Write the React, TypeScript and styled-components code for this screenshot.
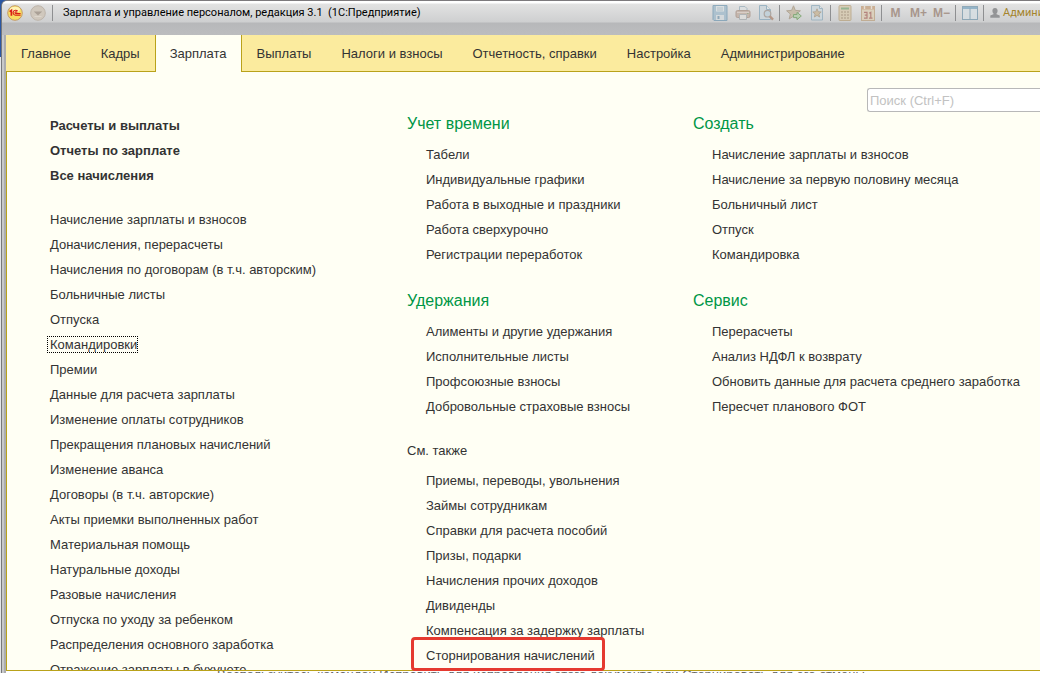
import React from "react";
import styled, { createGlobalStyle, css } from "styled-components";

const Global = createGlobalStyle`
  * { box-sizing: border-box; }
  body { margin: 0; font-family: "Liberation Sans", Arial, sans-serif; font-size: 13px; color: #333; }
`;

const Backdrop = styled.div`
  height: 100vh;
  padding-left: 1px;
  overflow: hidden;
  background: linear-gradient(#2b57a3 0 57px, #e4e6e9 57px);
`;
const Frame = styled.div`
  height: 100%;
  display: flex;
  flex-direction: column;
  border-top: 1px solid #7d7a7d;
  border-left: 1px solid #77787a;
  border-top-left-radius: 6px;
  background: linear-gradient(90deg, #c8c9ca 0 2px, #acadaf 2px 4px, #b9babc 4px);
  overflow: hidden;
`;
const TitleBar = styled.header`
  flex: none;
  height: 34px;
  padding: 0 0 10px 5px;
  display: flex;
  align-items: center;
  overflow: hidden;
  background: linear-gradient(#fff 0 2px, #e2e2e2 3px, #cecfd0 21px, #b7b8ba 22px, #bcbdbf 34px);
`;
const WindowButtons = styled.div`
  flex: none;
  display: flex;
  gap: 7px;
  margin-right: 4px;
`;
const RoundButton = styled.button`
  width: 16px;
  height: 16px;
  padding: 0;
  border: 0;
  background: none;
  svg { display: block; }
`;
const Divider = styled.span`
  flex: none;
  width: 1px;
  height: 16px;
  margin: 0 2px;
  background: #8e8f91;
`;
const Title = styled.h1`
  flex: 1;
  min-width: 0;
  overflow: hidden;
  margin: 0 0 0 8px;
  font-family: Roboto, "Liberation Sans", sans-serif;
  font-size: 11px;
  line-height: 16px;
  font-weight: 400;
  white-space: pre;
  color: #000;
`;
const Tools = styled.div`
  flex: none;
  display: flex;
  align-items: center;
`;
const Tool = styled.button`
  width: 23px;
  height: 16px;
  padding: 0;
  border: 0;
  display: flex;
  align-items: center;
  justify-content: center;
  background: none;
  color: #a8968c;
  font: bold 12px "Liberation Sans", sans-serif;
  svg { display: block; opacity: 0.8; }
`;
const User = styled.a`
  display: flex;
  align-items: center;
  gap: 3px;
  width: 54px;
  padding-left: 4px;
  overflow: hidden;
  white-space: nowrap;
  font-family: Roboto, sans-serif;
  font-size: 11px;
  line-height: 16px;
  color: #a5842c;
  text-decoration: none;
  svg { flex: none; }
`;

const Body = styled.div`
  flex: 1;
  min-height: 0;
  margin-left: 4px;
  display: flex;
  flex-direction: column;
  background: #fff;
`;
const Tabs = styled.nav`
  flex: none;
  height: 37px;
  display: flex;
  background: #fbeb9e;
  border-bottom: 1px solid #b9a21a;
`;
const Tab = styled.a<{ $active?: boolean }>`
  height: 37px;
  padding: 0 15px;
  line-height: 37px;
  color: #333;
  text-decoration: none;
  white-space: nowrap;
  ${(p) => p.$active && css`
    padding: 0 14px;
    background: #fffff4;
    border: solid #b9a21a;
    border-width: 0 1px;
  `}
`;
const Panel = styled.main`
  flex: 1;
  min-height: 0;
  display: flex;
  flex-direction: column;
  padding: 16px 0 0 40px;
  background: #fffff4;
  border-left: 1px solid #b9a21a;
  border-bottom: 1px solid #b9a21a;
`;
const Search = styled.input`
  flex: none;
  align-self: flex-end;
  width: 173px;
  height: 24px;
  padding: 0 2px;
  border: 1px solid #b8b8b8;
  border-right: 0;
  border-radius: 3px 0 0 3px;
  background: #fff;
  font: 13px "Liberation Sans", Arial, sans-serif;
  &::placeholder { color: #c2c2c2; }
`;
const Columns = styled.div`
  flex: 1;
  min-height: 0;
  padding-top: 1px;
  display: grid;
  grid-template-columns: 360fr 286fr 347fr;
  grid-template-rows: minmax(0, 1fr);
`;
const Journal = styled.section`
  min-width: 0;
  padding-left: 3px;
  overflow: hidden;
`;
const Column = styled.div`
  min-width: 0;
`;
const List = styled.ul<{ $indent?: boolean; $strong?: boolean }>`
  list-style: none;
  margin: 0 0 ${(p) => (p.$strong ? 19 : 23)}px;
  padding: 0 0 0 ${(p) => (p.$indent ? 19 : 0)}px;
  font-weight: ${(p) => (p.$strong ? 700 : 400)};
`;
const Item = styled.li<{ $marked?: boolean }>`
  position: relative;
  width: fit-content;
  height: 25px;
  line-height: 25px;
  white-space: nowrap;
  ${(p) => p.$marked && css`
    &::after {
      content: "";
      position: absolute;
      inset: -6px -10px -3px -15px;
      border: 3px solid #e53a30;
      border-radius: 4px;
      pointer-events: none;
    }
  `}
`;
const Link = styled.a<{ $focused?: boolean }>`
  color: inherit;
  text-decoration: none;
  ${(p) => p.$focused && css`
    margin-left: -2px;
    padding-left: 2px;
    outline: 1px dotted #000;
  `}
`;
const Heading = styled.h2<{ $plain?: boolean }>`
  margin: 0 0 ${(p) => (p.$plain ? 8 : 7)}px;
  font-size: ${(p) => (p.$plain ? 13 : 16)}px;
  line-height: ${(p) => (p.$plain ? 18 : 22)}px;
  font-weight: 400;
  color: ${(p) => (p.$plain ? "#333" : "#009646")};
`;
const Hint = styled.footer`
  flex: none;
  height: 2px;
  padding-left: 211px;
  overflow: hidden;
  line-height: 8px;
  white-space: nowrap;
  color: #666;
`;

const LogoIcon = () => (
  <svg width="16" height="16" viewBox="0 0 16 16" aria-hidden="true">
    <circle cx="8" cy="8" r="7.3" fill="#f8dd62" stroke="#c39a67" />
    <ellipse cx="8" cy="4.6" rx="5" ry="2.8" fill="#fff3b4" />
    <path d="M2.6 6.6L4.4 5.4V10.8" fill="none" stroke="#d91e18" strokeWidth="1.7" />
    <path d="M10.6 6.2A2.5 2.5 0 1 0 8.6 10.2H13.6M10 7.6A1 1 0 1 0 8.6 8.6H13.6" fill="none" stroke="#d91e18" strokeWidth="1.1" />
  </svg>
);
const MenuIcon = () => (
  <svg width="16" height="16" viewBox="0 0 16 16" aria-hidden="true">
    <circle cx="8" cy="8" r="7.3" fill="#d0c8bd" stroke="#bdb4aa" />
    <path d="M3.8 6.4H12.2L8 10.6Z" fill="#aaa096" />
    <path d="M4.5 11.5H11.5" stroke="#ddd6cc" />
  </svg>
);
const SaveIcon = () => (
  <svg width="16" height="16" viewBox="0 0 16 16" aria-hidden="true">
    <path d="M1 .5H15V15.5H2L1 14.5Z" fill="#a3bccc" stroke="#7b9eb5" />
    <path d="M4 1H12V6.5H4Z" fill="#d9e0e3" />
    <path d="M5 3H11M5 5H11" stroke="#a8bbc6" />
    <path d="M4 10H12V15H4Z" fill="#d5dbde" />
    <path d="M5.5 11H7.5V14H5.5Z" fill="#7f9db1" />
  </svg>
);
const PrintIcon = () => (
  <svg width="16" height="16" viewBox="0 0 16 16" aria-hidden="true">
    <path d="M4.5 6V1.5H10L12 3.5V6" fill="#dce0e2" stroke="#9db0bc" />
    <rect x="1" y="5.5" width="14" height="7" rx="1.5" fill="#c1aea2" stroke="#a99488" />
    <path d="M2 7.5H14" stroke="#d9ccc3" />
    <path d="M4.5 9.5H11.5V14.5H4.5Z" fill="#dfdedc" stroke="#a7acae" />
    <path d="M12 8.5H13.5" stroke="#8fa57f" />
  </svg>
);
const PreviewIcon = () => (
  <svg width="16" height="16" viewBox="0 0 16 16" aria-hidden="true">
    <path d="M1.5 .5H8.5L12.5 4.5V14.5H1.5Z" fill="#ccd6dc" stroke="#8baabd" />
    <path d="M8.5 .5V4.5H12.5" fill="#e1e6e8" stroke="#8baabd" />
    <circle cx="9.5" cy="8.7" r="3.3" fill="#bfd0da" stroke="#a39a94" strokeWidth="1.2" />
    <path d="M11.8 11.2L15 14.6" stroke="#ad8975" strokeWidth="2.4" />
  </svg>
);
const StarArrowIcon = () => (
  <svg width="16" height="16" viewBox="0 0 16 16" aria-hidden="true">
    <path d="M7.5 .8L9.3 5.4L14.4 5.8L10.5 8.9L11.7 13.7L7.5 11.2L3.2 13.9L4.4 9L.6 5.8L5.6 5.4Z" fill="#c4b79f" stroke="#a89a86" />
    <path d="M7.5 9.5H11V7.3L15.3 11L11 14.7V12.6H7.5Z" fill="#b3cda7" stroke="#74a066" />
  </svg>
);
const PageStarIcon = () => (
  <svg width="16" height="16" viewBox="0 0 16 16" aria-hidden="true">
    <path d="M2.5 .5H10.5L13.5 3.5V15H2.5Z" fill="#cbd6dc" stroke="#93adbd" />
    <path d="M10.5 .5V3.5H13.5" fill="#e1e6e8" stroke="#93adbd" />
    <path d="M8 3.8L9.2 6.7L12.2 7L9.9 9L10.6 12L8 10.4L5.4 12L6.1 9L3.8 7L6.8 6.7Z" fill="#c8b697" stroke="#a4937c" strokeWidth=".8" />
  </svg>
);
const CalculatorIcon = () => (
  <svg width="16" height="16" viewBox="0 0 16 16" aria-hidden="true">
    <rect x="2" y=".5" width="12" height="15" rx="1" fill="#d6c8ad" stroke="#b9a583" />
    <path d="M4 3.5H12" stroke="#84ab80" strokeWidth="2" />
    <path d="M4 7H12M4 10H12M4 13H12" stroke="#a08c74" strokeWidth="1.2" strokeDasharray="2 1" />
  </svg>
);
const CalendarIcon = () => (
  <svg width="16" height="16" viewBox="0 0 16 16" aria-hidden="true">
    <rect x="1.5" y="1.5" width="13" height="14" fill="#dccfb6" stroke="#bda585" />
    <path d="M1 3H15" stroke="#c9a482" strokeWidth="3" />
    <path d="M4.5 0V4M11.5 0V4" stroke="#e8e0d6" strokeWidth="1.4" />
    <path d="M4 7.3H7V13.2H4M4.8 10.2H7M9.2 8.3L10.8 7.3V13.4M9 13.2H12.5" fill="none" stroke="#ac7068" strokeWidth="1.2" />
  </svg>
);
const PanelsIcon = () => (
  <svg width="16" height="16" viewBox="0 0 16 16" aria-hidden="true">
    <rect x=".5" y="1.5" width="15" height="13" fill="#d7dfe3" stroke="#7d9db0" />
    <path d="M1 3H15" stroke="#84acc5" strokeWidth="2" />
    <path d="M8 3V14" stroke="#7d9db0" />
  </svg>
);
const UserIcon = () => (
  <svg width="10" height="12" viewBox="0 0 10 12" aria-hidden="true">
    <path d="M5 1C6.8 1 7.6 2.1 7.6 3.8C7.6 5 7.1 6 6.5 6.6V7.3L9.7 8.4V10.8H.3V8.4L3.5 7.3V6.6C2.9 6 2.4 5 2.4 3.8C2.4 2.1 3.2 1 5 1Z" fill="#939496" />
  </svg>
);

const tabs = ["Главное", "Кадры", "Зарплата", "Выплаты", "Налоги и взносы", "Отчетность, справки", "Настройка", "Администрирование"];
const main = ["Расчеты и выплаты", "Отчеты по зарплате", "Все начисления"];
const journals = [
  "Начисление зарплаты и взносов", "Доначисления, перерасчеты", "Начисления по договорам (в т.ч. авторским)",
  "Больничные листы", "Отпуска", "Командировки", "Премии", "Данные для расчета зарплаты",
  "Изменение оплаты сотрудников", "Прекращения плановых начислений", "Изменение аванса",
  "Договоры (в т.ч. авторские)", "Акты приемки выполненных работ", "Материальная помощь",
  "Натуральные доходы", "Разовые начисления", "Отпуска по уходу за ребенком",
  "Распределения основного заработка", "Отражение зарплаты в бухучете",
];

type GroupProps = { title: string; items: string[]; plain?: boolean };
const middle: GroupProps[] = [
  { title: "Учет времени", items: ["Табели", "Индивидуальные графики", "Работа в выходные и праздники", "Работа сверхурочно", "Регистрации переработок"] },
  { title: "Удержания", items: ["Алименты и другие удержания", "Исполнительные листы", "Профсоюзные взносы", "Добровольные страховые взносы"] },
  { title: "См. также", plain: true, items: ["Приемы, переводы, увольнения", "Займы сотрудникам", "Справки для расчета пособий", "Призы, подарки", "Начисления прочих доходов", "Дивиденды", "Компенсация за задержку зарплаты", "Сторнирования начислений"] },
];
const right: GroupProps[] = [
  { title: "Создать", items: ["Начисление зарплаты и взносов", "Начисление за первую половину месяца", "Больничный лист", "Отпуск", "Командировка"] },
  { title: "Сервис", items: ["Перерасчеты", "Анализ НДФЛ к возврату", "Обновить данные для расчета среднего заработка", "Пересчет планового ФОТ"] },
];

const Group = ({ title, items, plain }: GroupProps) => (
  <section>
    <Heading $plain={plain}>{title}</Heading>
    <List $indent>
      {items.map((t) => (
        <Item key={t} $marked={t === "Сторнирования начислений"}><Link href="#">{t}</Link></Item>
      ))}
    </List>
  </section>
);

export default function App() {
  return (
    <Backdrop>
      <Global />
      <Frame>
        <TitleBar>
          <WindowButtons>
            <RoundButton aria-label="1С:Предприятие"><LogoIcon /></RoundButton>
            <RoundButton aria-label="Главное меню"><MenuIcon /></RoundButton>
          </WindowButtons>
          <Divider />
          <Title>Зарплата и управление персоналом, редакция 3.1  (1С:Предприятие)</Title>
          <Tools>
            <Tool aria-label="Сохранить"><SaveIcon /></Tool>
            <Tool aria-label="Печать"><PrintIcon /></Tool>
            <Tool aria-label="Предварительный просмотр"><PreviewIcon /></Tool>
            <Divider />
            <Tool aria-label="Добавить в избранное"><StarArrowIcon /></Tool>
            <Tool aria-label="Избранное"><PageStarIcon /></Tool>
            <Divider />
            <Tool aria-label="Калькулятор"><CalculatorIcon /></Tool>
            <Tool aria-label="Календарь"><CalendarIcon /></Tool>
            <Divider />
            <Tool>M</Tool>
            <Tool>M+</Tool>
            <Tool>M−</Tool>
            <Divider />
            <Tool aria-label="Панели"><PanelsIcon /></Tool>
            <Divider />
            <User href="#"><UserIcon />Администратор</User>
          </Tools>
        </TitleBar>
        <Body>
          <Tabs>
            {tabs.map((t) => <Tab key={t} href="#" $active={t === "Зарплата"}>{t}</Tab>)}
          </Tabs>
          <Panel>
            <Search aria-label="Поиск" placeholder="Поиск (Ctrl+F)" />
            <Columns>
              <Journal>
                <List $strong>{main.map((t) => <Item key={t}><Link href="#">{t}</Link></Item>)}</List>
                <List>{journals.map((t) => <Item key={t}><Link href="#" $focused={t === "Командировки"}>{t}</Link></Item>)}</List>
              </Journal>
              <Column>{middle.map((g) => <Group key={g.title} {...g} />)}</Column>
              <Column>{right.map((g) => <Group key={g.title} {...g} />)}</Column>
            </Columns>
          </Panel>
          <Hint>Воспользуйтесь командой Исправить для исправления этого документа или Сторнировать для его отмены</Hint>
        </Body>
      </Frame>
    </Backdrop>
  );
}
